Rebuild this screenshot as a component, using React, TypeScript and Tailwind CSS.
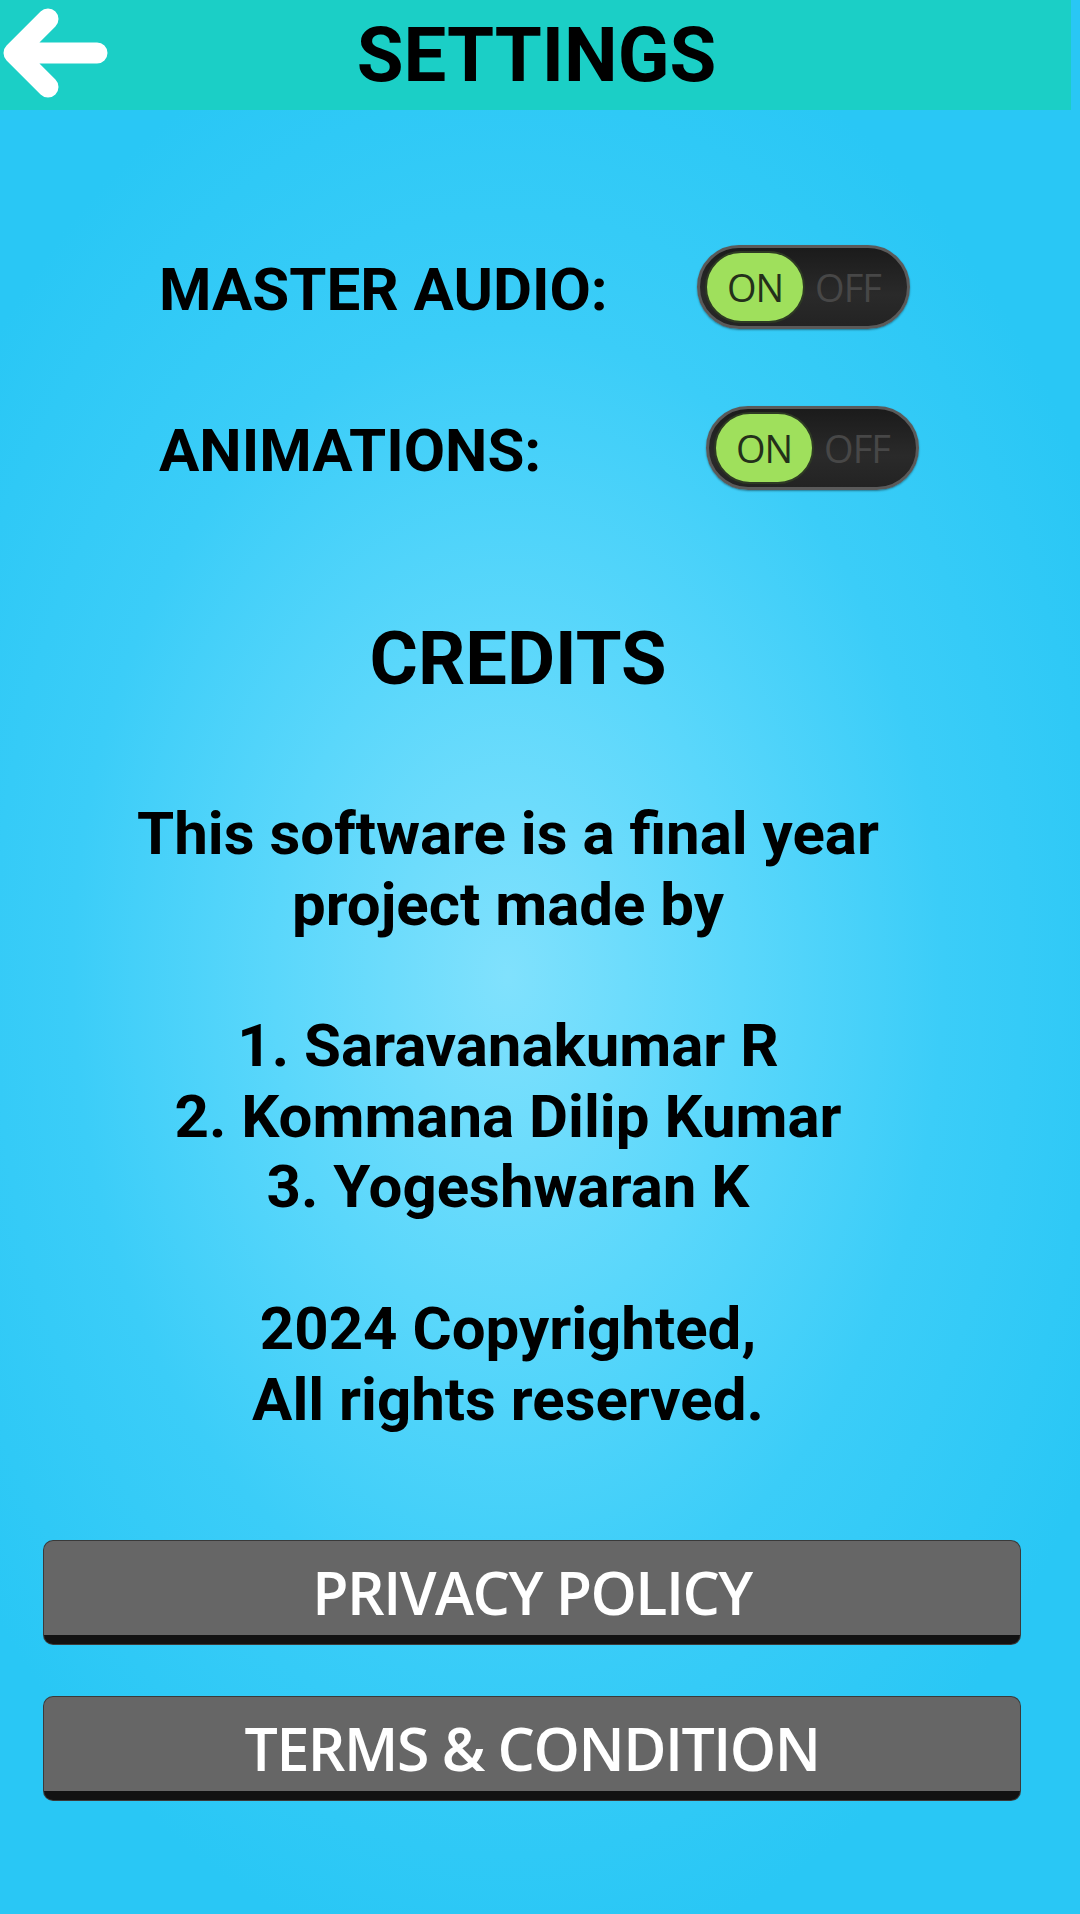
import React from "react";

function Toggle() {
  return (
    <div className="w-[213px] h-[84px] rounded-full border-[3px] border-[#5a5a5a] bg-[linear-gradient(180deg,#1b1b1b_0%,#2a2a2a_60%,#232323_100%)] shadow-[0_1px_2px_rgba(0,0,0,0.4)] flex items-center pl-[5px] pr-[16px]">
      <div className="w-[100px] h-[72px] rounded-full bg-[#9fe05c] border-2 border-[#2e3a24] flex items-center justify-center">
        <span className="font-['Open_Sans',sans-serif] text-[38px] leading-none text-[#24301a] tracking-[-1px]">ON</span>
      </div>
      <span className="flex-1 text-center font-['Open_Sans',sans-serif] text-[38px] leading-none text-[#474747] tracking-[-1px]">OFF</span>
    </div>
  );
}

function Row({ label, labelWidth }: { label: string; labelWidth: string }) {
  return (
    <div className="flex items-center h-[84px] pl-[159px]">
      <span className={`${labelWidth} pt-[6px] text-[60px] leading-none font-bold text-black`}>{label}</span>
      <Toggle />
    </div>
  );
}

function ActionButton({ text }: { text: string }) {
  return (
    <button className="mx-[44px] w-[976px] h-[103px] rounded-[9px] bg-[#666666] border-b-[9px] border-[#121212] shadow-[0_0_0_1px_#3a3a3a] flex items-center justify-center pt-[8px]">
      <span className="font-['Open_Sans',sans-serif] font-semibold text-[59px] leading-none text-white tracking-[-1.5px]">
        {text}
      </span>
    </button>
  );
}

export default function App() {
  const lines = [
    "This software is a final year",
    "project made by",
    "",
    "1. Saravanakumar R",
    "2. Kommana Dilip Kumar",
    "3. Yogeshwaran K",
    "",
    "2024 Copyrighted,",
    "All rights reserved.",
  ];

  return (
    <div className="w-[1080px] h-[1914px] font-['Roboto',sans-serif] bg-[radial-gradient(ellipse_62%_52%_at_47%_51%,#80e1fd_0%,#5ad7fb_35%,#3bcdf8_65%,#29c7f5_100%)] flex flex-col">
      <header className="w-[1071px] h-[110px] bg-[#1bcfc6] flex items-center relative">
        <svg className="absolute left-0 top-0" width="110" height="110" viewBox="0 0 110 110">
          <path
            d="M97 53 H14 M48 19 L14 53 L48 87"
            fill="none"
            stroke="#ffffff"
            strokeWidth="21"
            strokeLinecap="round"
            strokeLinejoin="round"
          />
        </svg>
        <h1 className="w-full pl-[2px] text-center text-[76px] leading-none font-bold text-black">SETTINGS</h1>
      </header>

      <div className="mt-[135px] flex flex-col gap-[77px]">
        <Row label="MASTER AUDIO:" labelWidth="w-[538px]" />
        <Row label="ANIMATIONS:" labelWidth="w-[547px]" />
      </div>

      <h2 className="mt-[132px] pr-[44px] text-center text-[74px] leading-none font-bold text-black">CREDITS</h2>

      <div className="mt-[103px] pr-[64px] text-center text-[60px] leading-[70.7px] font-bold text-black">
        {lines.map((l, i) => (
          <div key={i} className="h-[70.7px]">{l}</div>
        ))}
      </div>

      <div className="mt-[106px] flex flex-col gap-[53px]">
        <ActionButton text="PRIVACY POLICY" />
        <ActionButton text="TERMS & CONDITION" />
      </div>
    </div>
  );
}
